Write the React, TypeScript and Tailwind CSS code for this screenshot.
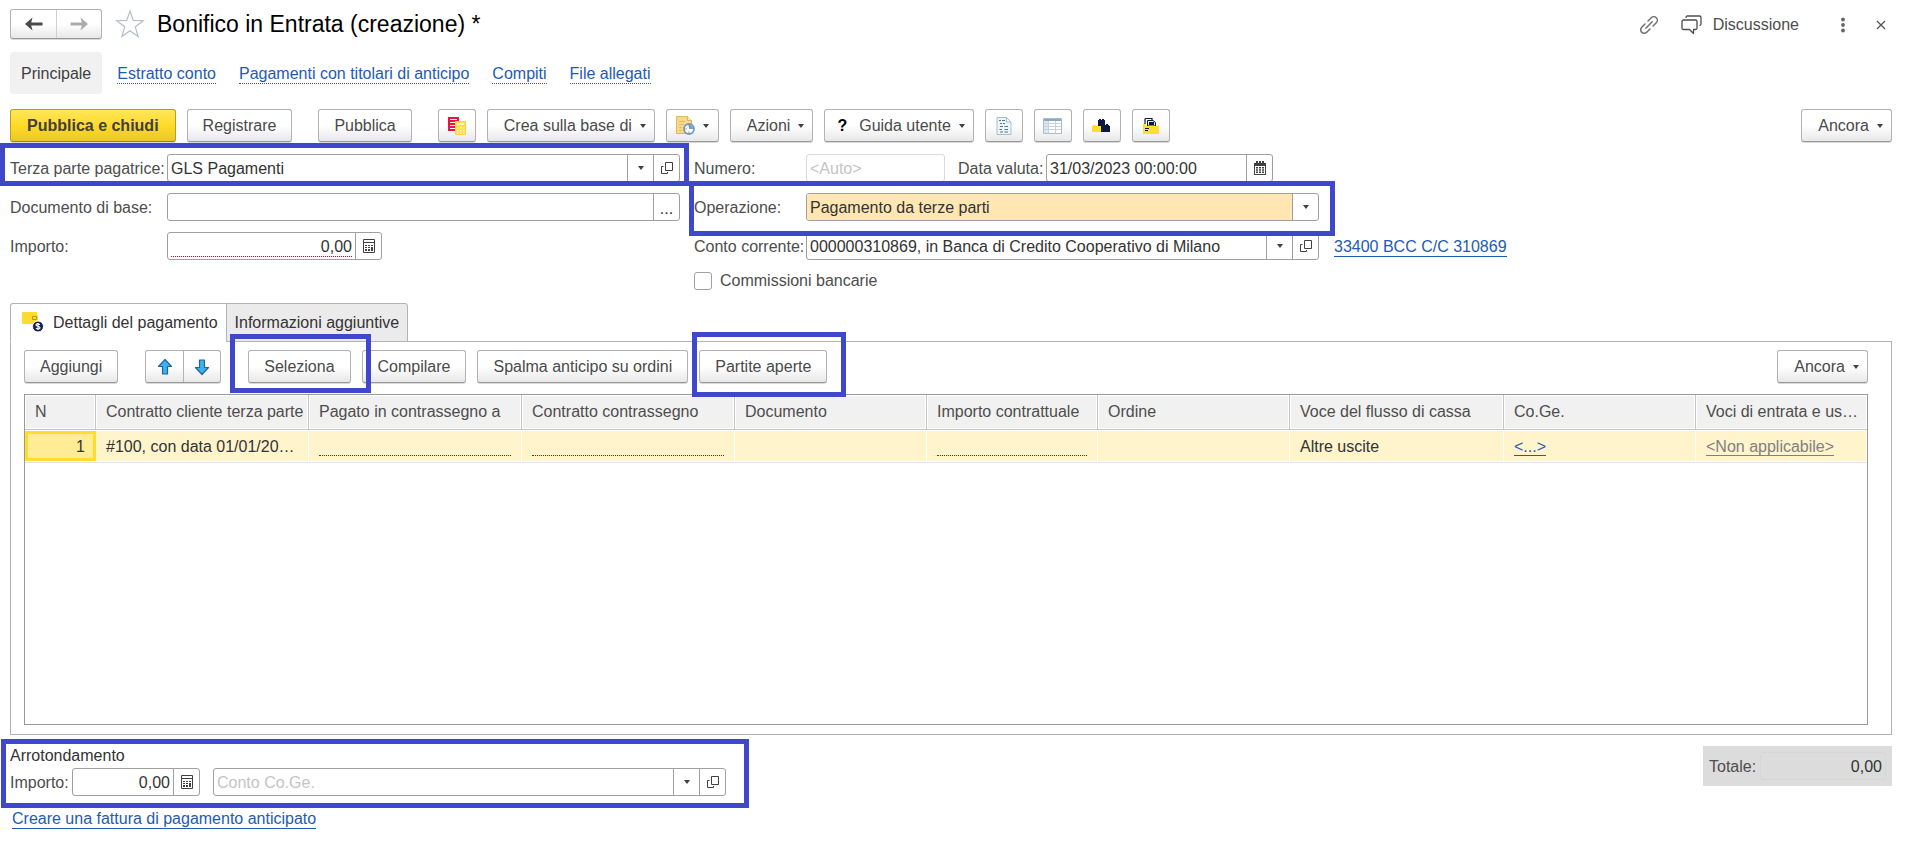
import { useState, type ReactNode } from "react"
import { clsx } from "clsx"

const navLinks = ["Estratto conto", "Pagamenti con titolari di anticipo", "Compiti", "File allegati"]

const columns = [
  { title: "N", width: "w-[71px]" },
  { title: "Contratto cliente terza parte", width: "w-[213px]" },
  { title: "Pagato in contrassegno a", width: "w-[213px]" },
  { title: "Contratto contrassegno", width: "w-[213px]" },
  { title: "Documento", width: "w-[192px]" },
  { title: "Importo contrattuale", width: "w-[171px]" },
  { title: "Ordine", width: "w-[192px]" },
  { title: "Voce del flusso di cassa", width: "w-[214px]" },
  { title: "Co.Ge.", width: "w-[192px]" },
  { title: "Voci di entrata e us…", width: "w-[171px]" },
]

/* ---------- icons ---------- */

function Caret({ className }: { className?: string }) {
  return (
    <svg viewBox="0 0 6 4" className={clsx("h-1 w-1.5 shrink-0", className)} fill="#404040" aria-hidden="true">
      <path d="M0 0h6L3 4z" />
    </svg>
  )
}

function OpenIcon() {
  return (
    <svg viewBox="0 0 12 12" className="size-3" fill="none" stroke="#404040" aria-hidden="true">
      <path d="M4.500.500h7v8h-7zM2.500 4.500h-2v7h6v-1.500" />
    </svg>
  )
}

function CalcIcon() {
  return (
    <svg viewBox="0 0 12 14" className="h-3.5 w-3" aria-hidden="true">
      <path d="M.5.5h11v13H.5z" fill="none" stroke="#404040" />
      <path d="M1 3h10v1H1zM2 6h2v1H2zM5 6h2v1H5zM8 6h2v1H8zM2 8h2v1H2zM5 8h2v1H5zM8 8h2v4H8zM2 10h2v2H2zM5 10h2v2H5z" fill="#404040" />
    </svg>
  )
}

function CalendarIcon() {
  return (
    <svg viewBox="0 0 12 14" className="h-3.5 w-3" fill="#404040" aria-hidden="true">
      <path fillRule="evenodd" d="M2 0h2v2h1V0h2v2h1V0h2v2h2v12H0V2h2zM1 5v8h10V5z" />
      <path d="M2 6h2v1.500H2zM5 6h2v1.500H5zM8 6h2v1.500H8zM2 8.300h2v1.500H2zM5 8.300h2v1.500H5zM8 8.300h2v1.500H8zM2 10.600h2v1.500H2zM5 10.600h2v1.500H5zM8 10.600h2v1.500H8z" />
    </svg>
  )
}

function HistoryArrow({ back }: { back?: boolean }) {
  return (
    <svg viewBox="0 0 18 14" className={clsx("h-3.5 w-[18px]", !back && "rotate-180")} fill={back ? "#4a4a4a" : "#ababab"} aria-hidden="true">
      <path d="M7.500.500 0 7l7.500 6.500-1.300-5H17.500V5.500H6.200z" />
    </svg>
  )
}

function StarIcon() {
  return (
    <svg viewBox="0 0 30 30" className="size-[30px]" fill="none" stroke="#b4bcc6" strokeWidth="1.200" aria-hidden="true">
      <path d="m15 2 3.300 9.400 10 .3-8 6.100 2.800 9.700-8.100-5.700-8.100 5.700 2.800-9.700-8-6.100 10-.3z" />
    </svg>
  )
}

function LinkIcon() {
  return (
    <svg viewBox="0 0 20 20" className="size-5" fill="none" stroke="#707070" strokeWidth="1.500" strokeLinecap="round" aria-hidden="true">
      <path d="m6.800 13.200 6.400-6.400" />
      <path d="m9 6 3.300-3.300a3.500 3.500 0 0 1 5 5L14 11M11 14l-3.300 3.300a3.500 3.500 0 0 1-5-5L6 9" />
    </svg>
  )
}

function ChatIcon() {
  return (
    <svg viewBox="0 0 21 20" className="h-5 w-[21px]" fill="none" stroke="#4d4d4d" strokeWidth="1.300" strokeLinejoin="round" aria-hidden="true">
      <path d="M5 3V2.500Q5 1 6.500 1H18.500Q20 1 20 2.500V9Q20 10.500 18.500 10.500" />
      <path d="M2.500 5H14.500Q16 5 16 6.500V13Q16 14.500 14.500 14.500H12.500V18.500L8.500 14.500H2.500Q1 14.500 1 13V6.500Q1 5 2.500 5z" />
    </svg>
  )
}

function MoveArrow({ down }: { down?: boolean }) {
  return (
    <svg viewBox="0 0 16 18" className={clsx("h-[18px] w-4", down && "rotate-180")} aria-hidden="true">
      <path d="M8 1.500 14.500 8.500H10.500V16H5.500V8.500H1.500z" fill="#3fb0f0" stroke="#1f6699" strokeWidth="1.200" strokeLinejoin="round" />
    </svg>
  )
}

function RegisterIcon() {
  return (
    <svg viewBox="0 0 18 18" className="size-[18px]" aria-hidden="true">
      <path d="M0 0h11v14H0z" fill="#e3173f" />
      <path d="M2 2h7v1H2zM2 5h7v1H2zM2 8h7v1H2zM2 11h7v1H2z" fill="#fff" />
      <path d="M7.500 4.500h10v13h-10z" fill="#ffe04a" stroke="#ffd23c" />
      <path d="M9 6h7v2H9zM9 10h1.500v1.500H9zM12 10h1.500v1.500H12zM15 10h1.500v1.500H15zM9 13h1.500v1.500H9zM12 13h1.500v1.500H12zM15 13h1.500v1.500H15zM9 15.500h1.500V17H9zM12 15.500h1.500V17H12zM15 15.500h1.500V17H15z" fill="#fff6c4" />
    </svg>
  )
}

function ScheduleIcon() {
  return (
    <svg viewBox="0 0 19 19" className="size-[19px]" aria-hidden="true">
      <path d="M.5.5h11l4 4V17.500H.5z" fill="#f7d98c" stroke="#dcb565" />
      <path d="M11.500.5v4h4" fill="#fff0bd" stroke="#dcb565" />
      <path d="M3 5.500h6M3 8.500h5M3 11.500h3M3 14.500h3" stroke="#e2bd68" />
      <circle cx="13" cy="13" r="5" fill="#fff" stroke="#6b9cc4" strokeWidth="1.800" />
      <path d="M13 13V8.800A4.200 4.200 0 0 1 17.200 13z" fill="#69a5d6" />
      <path d="M13 9.500v1M9.500 13h1M13 15.500v1" stroke="#d33" strokeWidth="1.200" />
    </svg>
  )
}

function ReportIcon() {
  return (
    <svg viewBox="0 0 16 18" className="h-[18px] w-4" aria-hidden="true">
      <path d="M1 .5h9.500l4.500 4.500v12.500H1z" fill="#eef5fa" stroke="#a9bdcb" />
      <path d="M10.500.5V5H15z" fill="#fff" stroke="#a9bdcb" />
      <path d="M3 3.500h2M6 3.500h3M4 6.500h2M7 6.500h2M4 9.500h3M8.500 9.500H12M3.500 12.500H6M8.500 12.500H12M4 15h3M8.500 15H12" stroke="#55758c" strokeWidth="1.200" />
    </svg>
  )
}

function ListIcon() {
  return (
    <svg viewBox="0 0 19 16" className="h-4 w-[19px]" aria-hidden="true">
      <path d="M.5.5h18v15H.5z" fill="#fff" stroke="#a9bdcb" />
      <path d="M1 1h17v2H1z" fill="#8aaac4" />
      <path d="M1 3h4v12H1z" fill="#dce8f1" />
      <path d="M5.500 3v12M12.500 3v12M1 5.500h17M1 8.500h17M1 11.500h17" stroke="#c5d3de" />
    </svg>
  )
}

function BricksIcon() {
  return (
    <svg viewBox="0 0 19 14" className="h-3.5 w-[19px]" aria-hidden="true">
      <path d="M0 7h1V6h3v1h1V6h3v1h2v6H0z" fill="#ffdf2b" />
      <path d="M6 1h1V0h2v1h1V0h2v1h1v5h1V5h2v1h1v1h1v6h-9V7H6z" fill="#0e1740" />
    </svg>
  )
}

function PrintFolderIcon() {
  return (
    <svg viewBox="0 0 16 16" className="size-4" aria-hidden="true">
      <path d="M2 6V1.200Q2 .5 3 .5H9V3" fill="none" stroke="#0e1740" strokeWidth="1.200" />
      <path d="M4.500 8V2.500H10L12.500 4.500V8z" fill="#dbe2ee" stroke="#0e1740" />
      <path d="M6 4h5v3H6z" fill="#0e1740" />
      <path d="M0 6h3v2h12v-1h1v9H0z" fill="#ffdf2b" />
      <path d="M2 10h4v1H2zM2 12h3v1H2z" fill="#0e1740" />
    </svg>
  )
}

function PaymentIcon() {
  return (
    <svg viewBox="0 0 22 21" className="h-[21px] w-[22px]" aria-hidden="true">
      <path d="M0 0h15v3h1v9H0z" fill="#ffdb2e" />
      <path d="M10.500 4.500h4v3h-4z" fill="none" stroke="#b8961c" />
      <circle cx="16" cy="14.500" r="5.500" fill="#17224f" stroke="#fff" />
      <path d="M18 12.500q-4-1.500-4 .5c0 1.500 4 1 4 2.700s-2.700 1.500-4 .6M16 11v7" fill="none" stroke="#fff" strokeWidth="1.100" />
    </svg>
  )
}

/* ---------- controls ---------- */

const buttonBase =
  "flex h-[33px] shrink-0 items-center justify-center rounded-[3px] border border-[#b3b3b3] border-b-[#999] bg-linear-to-b from-white from-50% to-[#e8e8e8] whitespace-nowrap text-[#4a4a4a] shadow-[0_1px_0_#d9d9d9]"

interface ButtonProps {
  children: ReactNode
  caret?: boolean
  className?: string
  label?: string
}

function Button({ children, caret, className = "px-[15px]", label }: ButtonProps) {
  return (
    <button type="button" aria-label={label} className={clsx(buttonBase, className)}>
      {children}
      {caret && <Caret className="ml-2" />}
    </button>
  )
}

function IconButton({ children, label }: { children: ReactNode; label: string }) {
  return (
    <Button label={label} className="w-[38px]">
      {children}
    </Button>
  )
}

function Field({ children, className, muted }: { children: ReactNode; className?: string; muted?: boolean }) {
  return (
    <div
      className={clsx(
        "flex h-7 shrink-0 overflow-hidden rounded-[3px] border bg-white",
        muted ? "border-[#d9d9d9]" : "border-[#a0a0a0]",
        className,
      )}
    >
      {children}
    </div>
  )
}

function FieldButton({ children, label }: { children: ReactNode; label: string }) {
  return (
    <button type="button" aria-label={label} className="flex w-[26px] shrink-0 items-center justify-center border-l border-[#a0a0a0] text-[#333]">
      {children}
    </button>
  )
}

// Blue marker drawn over the parts of the form to look at
function Highlight({ className }: { className: string }) {
  return <div className={clsx("pointer-events-none absolute z-10 border-[5px] border-[#3f48cc]", className)} />
}

const inputClass = "min-w-0 flex-1 bg-transparent px-[3px] pt-0.5 text-[#333] outline-none placeholder:text-[#c4c4c4]"
const labelClass = "shrink-0 pt-0.5 whitespace-nowrap text-[#4d4d4d]"

/* ---------- page sections ---------- */

function TitleBar() {
  return (
    <header className="flex h-[30px] items-center">
      <div className="flex h-[30px] rounded-[3px] border border-[#b3b3b3] border-b-[#999] bg-linear-to-b from-white from-50% to-[#e8e8e8] shadow-[0_1px_0_#d9d9d9]">
        <button type="button" aria-label="Indietro" className="flex w-[46px] items-center justify-center border-r border-[#d0d0d0]">
          <HistoryArrow back />
        </button>
        <button type="button" aria-label="Avanti" className="flex w-11 items-center justify-center">
          <HistoryArrow />
        </button>
      </div>
      <button type="button" aria-label="Preferiti" className="ml-[13px]">
        <StarIcon />
      </button>
      <h1 className="ml-3 text-[23px] leading-7 text-black">Bonifico in Entrata (creazione) *</h1>
      <div className="ml-auto flex items-center pt-0.5 pr-1.5 text-[#4d4d4d]">
        <button type="button" aria-label="Collegamento">
          <LinkIcon />
        </button>
        <button type="button" className="ml-[22px] flex items-center gap-[11px]">
          <ChatIcon />
          Discussione
        </button>
        <button type="button" aria-label="Menu" className="ml-[42px]">
          <svg viewBox="0 0 4 16" className="h-4 w-1" fill="#666" aria-hidden="true">
            <circle cx="2" cy="2.500" r="1.900" />
            <circle cx="2" cy="8" r="1.900" />
            <circle cx="2" cy="13.500" r="1.900" />
          </svg>
        </button>
        <button type="button" aria-label="Chiudi" className="ml-[31px]">
          <svg viewBox="0 0 10 10" className="size-2.5" stroke="#555" strokeWidth="1.300" aria-hidden="true">
            <path d="m1 1 8 8M9 1 1 9" />
          </svg>
        </button>
      </div>
    </header>
  )
}

function SectionNav() {
  return (
    <nav className="mt-[13px] flex items-center gap-[23px]">
      <span className="-mr-2 flex h-[42px] items-center rounded bg-[#f1f1f1] px-[11px] pt-0.5 text-[#404040]">Principale</span>
      {navLinks.map((link) => (
        <a key={link} href="#" className="border-b border-dotted border-[#1d5bb5] pt-0.5 leading-[18px] text-[#1d5bb5]">
          {link}
        </a>
      ))}
    </nav>
  )
}

function CommandBar() {
  return (
    <div className="mt-[15px] flex items-center gap-[11px]">
      <button
        type="button"
        className="h-[33px] shrink-0 rounded-[3px] border border-[#b8a01c] border-b-[#9c8714] bg-linear-to-b from-[#ffe658] via-[#ffdb26] to-[#e8c828] px-4 font-bold whitespace-nowrap text-[#404040] shadow-[0_1px_0_#d9d9d9]"
      >
        Pubblica e chiudi
      </button>
      <Button>Registrare</Button>
      <Button className="mx-[15px] px-[15px]">Pubblica</Button>
      <IconButton label="Registrazioni">
        <RegisterIcon />
      </IconButton>
      <Button caret className="pr-2 pl-4">Crea sulla base di</Button>
      <Button caret label="Pianifica" className="px-[9px]">
        <ScheduleIcon />
      </Button>
      <Button caret className="pr-2 pl-4">Azioni</Button>
      <Button caret className="pr-2 pl-3">
        <span className="mr-3 font-bold text-black">?</span>
        Guida utente
      </Button>
      <IconButton label="Rapporto">
        <ReportIcon />
      </IconButton>
      <IconButton label="Elenco">
        <ListIcon />
      </IconButton>
      <IconButton label="Componenti">
        <BricksIcon />
      </IconButton>
      <IconButton label="File di stampa">
        <PrintFolderIcon />
      </IconButton>
      <Button caret className="ml-auto pr-2 pl-4">Ancora</Button>
    </div>
  )
}

function PaymentForm() {
  return (
    <div className="mt-3 flex gap-3.5">
      <div className="flex flex-col gap-[11px]">
        <div className="relative flex items-center">
          <label htmlFor="payer" className={clsx(labelClass, "w-[157px]")}>Terza parte pagatrice:</label>
          <Field className="w-[513px]">
            <input id="payer" className={inputClass} defaultValue="GLS Pagamenti" />
            <FieldButton label="Scegli"><Caret /></FieldButton>
            <FieldButton label="Apri"><OpenIcon /></FieldButton>
          </Field>
          <Highlight className="-top-[11px] -right-[9px] -bottom-1 -left-2.5" />
        </div>
        <div className="flex items-center">
          <label htmlFor="base-doc" className={clsx(labelClass, "w-[157px]")}>Documento di base:</label>
          <Field className="w-[513px]">
            <input id="base-doc" className={inputClass} />
            <FieldButton label="Scegli documento"><span className="pt-1">...</span></FieldButton>
          </Field>
        </div>
        <div className="flex items-center">
          <label htmlFor="amount" className={clsx(labelClass, "w-[157px]")}>Importo:</label>
          <Field className="w-[215px]">
            <input
              id="amount"
              className="mx-[3px] mb-0.5 min-w-0 flex-1 border-b border-dotted border-[#e00000] pt-1 text-right text-[#333] outline-none"
              defaultValue="0,00"
            />
            <FieldButton label="Calcolatrice"><CalcIcon /></FieldButton>
          </Field>
        </div>
      </div>

      <div className="flex flex-col gap-[11px]">
        <div className="flex items-center">
          <label htmlFor="number" className={clsx(labelClass, "w-28")}>Numero:</label>
          <Field muted className="w-[139px]">
            <input id="number" className={inputClass} placeholder="<Auto>" />
          </Field>
          <label htmlFor="value-date" className={clsx(labelClass, "ml-[13px] w-[88px]")}>Data valuta:</label>
          <Field className="w-[227px]">
            <input id="value-date" className={inputClass} defaultValue="31/03/2023 00:00:00" />
            <FieldButton label="Calendario"><CalendarIcon /></FieldButton>
          </Field>
        </div>
        <div className="relative flex w-[625px] items-center">
          <label htmlFor="operation" className={clsx(labelClass, "w-28")}>Operazione:</label>
          <Field className="w-[513px]">
            <select id="operation" className="min-w-0 flex-1 appearance-none bg-[#ffe6b3] px-[3px] pt-0.5 text-[#333] outline-none">
              <option>Pagamento da terze parti</option>
            </select>
            <span className="flex w-[26px] shrink-0 items-center justify-center border-l border-[#a0a0a0]"><Caret /></span>
          </Field>
          <Highlight className="-top-3 -right-4 -bottom-[15px] -left-[5px]" />
        </div>
        <div className="flex items-center">
          <label htmlFor="account" className={clsx(labelClass, "w-28")}>Conto corrente:</label>
          <Field className="w-[513px]">
            <input id="account" className={inputClass} defaultValue="000000310869, in Banca di Credito Cooperativo di Milano" />
            <FieldButton label="Scegli conto"><Caret /></FieldButton>
            <FieldButton label="Apri conto"><OpenIcon /></FieldButton>
          </Field>
          <a href="#" className="ml-[15px] border-b border-[#1d5bb5] pt-0.5 leading-[18px] whitespace-nowrap text-[#1d5bb5]">33400 BCC C/C 310869</a>
        </div>
        <label className="mt-px flex items-center gap-2 leading-[18px] text-[#4d4d4d]">
          <input type="checkbox" className="size-[18px] appearance-none rounded-[3px] border border-[#a0a0a0] bg-white checked:bg-[#ffdb26]" />
          Commissioni bancarie
        </label>
      </div>
    </div>
  )
}

function PaymentTable() {
  const cell = "h-[33px] border-r border-b border-r-white border-b-[#e3e3e3] bg-[#fff4cc] px-2.5 pt-0.5 whitespace-nowrap shadow-[inset_0_1px_0_#fff,inset_0_-1px_0_#fff]"
  const required = <div className="h-[18px] border-b border-dotted border-[#e00000]" />

  return (
    <div className="mt-[11px] h-[331px] overflow-hidden border border-[#999]">
      <table className="w-full table-fixed border-separate border-spacing-0">
        <thead>
          <tr>
            {columns.map((col) => (
              <th
                key={col.title}
                className={clsx(
                  "h-[35px] truncate border-r border-b border-[#c6c6c6] bg-[#f1f1f1] pr-1 pl-2.5 text-left font-normal text-[#4d4d4d] shadow-[inset_0_0_0_1px_#fff] last:border-r-0",
                  col.width,
                )}
              >
                {col.title}
              </th>
            ))}
          </tr>
        </thead>
        <tbody className="text-[#333]">
          <tr>
            <td className="h-[33px] border-b border-[#e3e3e3] p-0">
              <div className="my-px flex h-[30px] items-center justify-end border-[3px] border-[#ffdc2e] bg-[#ffec94] pt-0.5 pr-2">1</div>
            </td>
            <td className={cell}>#100, con data 01/01/20…</td>
            <td className={cell}>{required}</td>
            <td className={cell}>{required}</td>
            <td className={cell} />
            <td className={cell}>{required}</td>
            <td className={cell} />
            <td className={cell}>Altre uscite</td>
            <td className={cell}>
              <a href="#" className="inline-block border-b border-[#1d5bb5] leading-4 text-[#1d5bb5]">&lt;...&gt;</a>
            </td>
            <td className={cell}>
              <a href="#" className="inline-block border-b border-[#808080] leading-4 text-[#808080]">&lt;Non applicabile&gt;</a>
            </td>
          </tr>
        </tbody>
      </table>
    </div>
  )
}

function DetailTabs() {
  const [tab, setTab] = useState(0)
  const tabClass = (index: number) =>
    clsx(
      "flex h-[39px] items-center border border-[#b3b3b3] text-[#333]",
      tab === index ? "border-b-white bg-white" : "bg-[#ebebeb]",
    )

  return (
    <section className="mt-[13px]">
      <div role="tablist" className="relative -mb-px flex">
        <button type="button" role="tab" aria-selected={tab === 0} onClick={() => setTab(0)} className={clsx(tabClass(0), "rounded-tl-[3px] pr-2 pl-[11px]")}>
          <PaymentIcon />
          <span className="ml-[9px]">Dettagli del pagamento</span>
        </button>
        <button type="button" role="tab" aria-selected={tab === 1} onClick={() => setTab(1)} className={clsx(tabClass(1), "-ml-px rounded-tr-[3px] px-2")}>
          Informazioni aggiuntive
        </button>
      </div>
      <div role="tabpanel" className="border border-[#b3b3b3] pt-2 pr-[23px] pb-[9px] pl-[13px]">
        <div className="flex items-center gap-[11px]">
          <Button>Aggiungi</Button>
          <div className="mx-4 flex h-[33px] rounded-[3px] border border-[#b3b3b3] border-b-[#999] bg-linear-to-b from-white from-50% to-[#e8e8e8] shadow-[0_1px_0_#d9d9d9]">
            <button type="button" aria-label="Sposta su" className="flex w-[38px] items-center justify-center border-r border-[#b3b3b3]">
              <MoveArrow />
            </button>
            <button type="button" aria-label="Sposta giù" className="flex w-9 items-center justify-center">
              <MoveArrow down />
            </button>
          </div>
          <div className="relative">
            <Button>Seleziona</Button>
            <Highlight className="-top-4 -right-5 -bottom-2.5 -left-[18px]" />
          </div>
          <Button>Compilare</Button>
          <Button>Spalma anticipo su ordini</Button>
          <div className="relative">
            <Button>Partite aperte</Button>
            <Highlight className="-top-[18px] -right-[19px] -bottom-3.5 -left-[7px]" />
          </div>
          <Button caret className="ml-auto pr-2 pl-4">Ancora</Button>
        </div>
        <PaymentTable />
      </div>
    </section>
  )
}

function Footer() {
  return (
    <footer className="mt-[11px] flex items-start justify-between">
      <div>
        <div className="relative">
          <fieldset>
            <legend className="pb-0.5 text-[#333]">Arrotondamento</legend>
            <div className="flex items-center">
              <label htmlFor="rounding" className={clsx(labelClass, "w-[62px]")}>Importo:</label>
              <Field className="w-32">
                <input id="rounding" className={clsx(inputClass, "text-right")} defaultValue="0,00" />
                <FieldButton label="Calcolatrice"><CalcIcon /></FieldButton>
              </Field>
              <Field className="ml-[13px] w-[513px]">
                <input aria-label="Conto Co.Ge." className={inputClass} placeholder="Conto Co.Ge." />
                <FieldButton label="Scegli Conto Co.Ge."><Caret /></FieldButton>
                <FieldButton label="Apri Conto Co.Ge."><OpenIcon /></FieldButton>
              </Field>
            </div>
          </fieldset>
          <Highlight className="-top-[7px] -right-[23px] -bottom-3 -left-[9px]" />
        </div>
        <a href="#" className="mt-[14px] ml-0.5 inline-block border-b border-[#1d5bb5] leading-[18px] text-[#1d5bb5]">
          Creare una fattura di pagamento anticipato
        </a>
      </div>
      <div className="flex h-10 w-[189px] items-center bg-[#dcdcdc] px-1.5">
        <label htmlFor="total" className={clsx(labelClass, "w-[51px]")}>Totale:</label>
        <input id="total" readOnly className="h-7 min-w-0 flex-1 rounded-[3px] border border-[#d6d6d6] bg-transparent px-[3px] pt-0.5 text-right text-[#333] outline-none" defaultValue="0,00" />
      </div>
    </footer>
  )
}

export default function App() {
  return (
    <main className="min-h-screen bg-white pt-[9px] pr-[23px] pl-2.5 font-['Liberation_Sans',Arial,sans-serif] text-[16px] leading-5">
      <TitleBar />
      <SectionNav />
      <CommandBar />
      <PaymentForm />
      <DetailTabs />
      <Footer />
    </main>
  )
}
